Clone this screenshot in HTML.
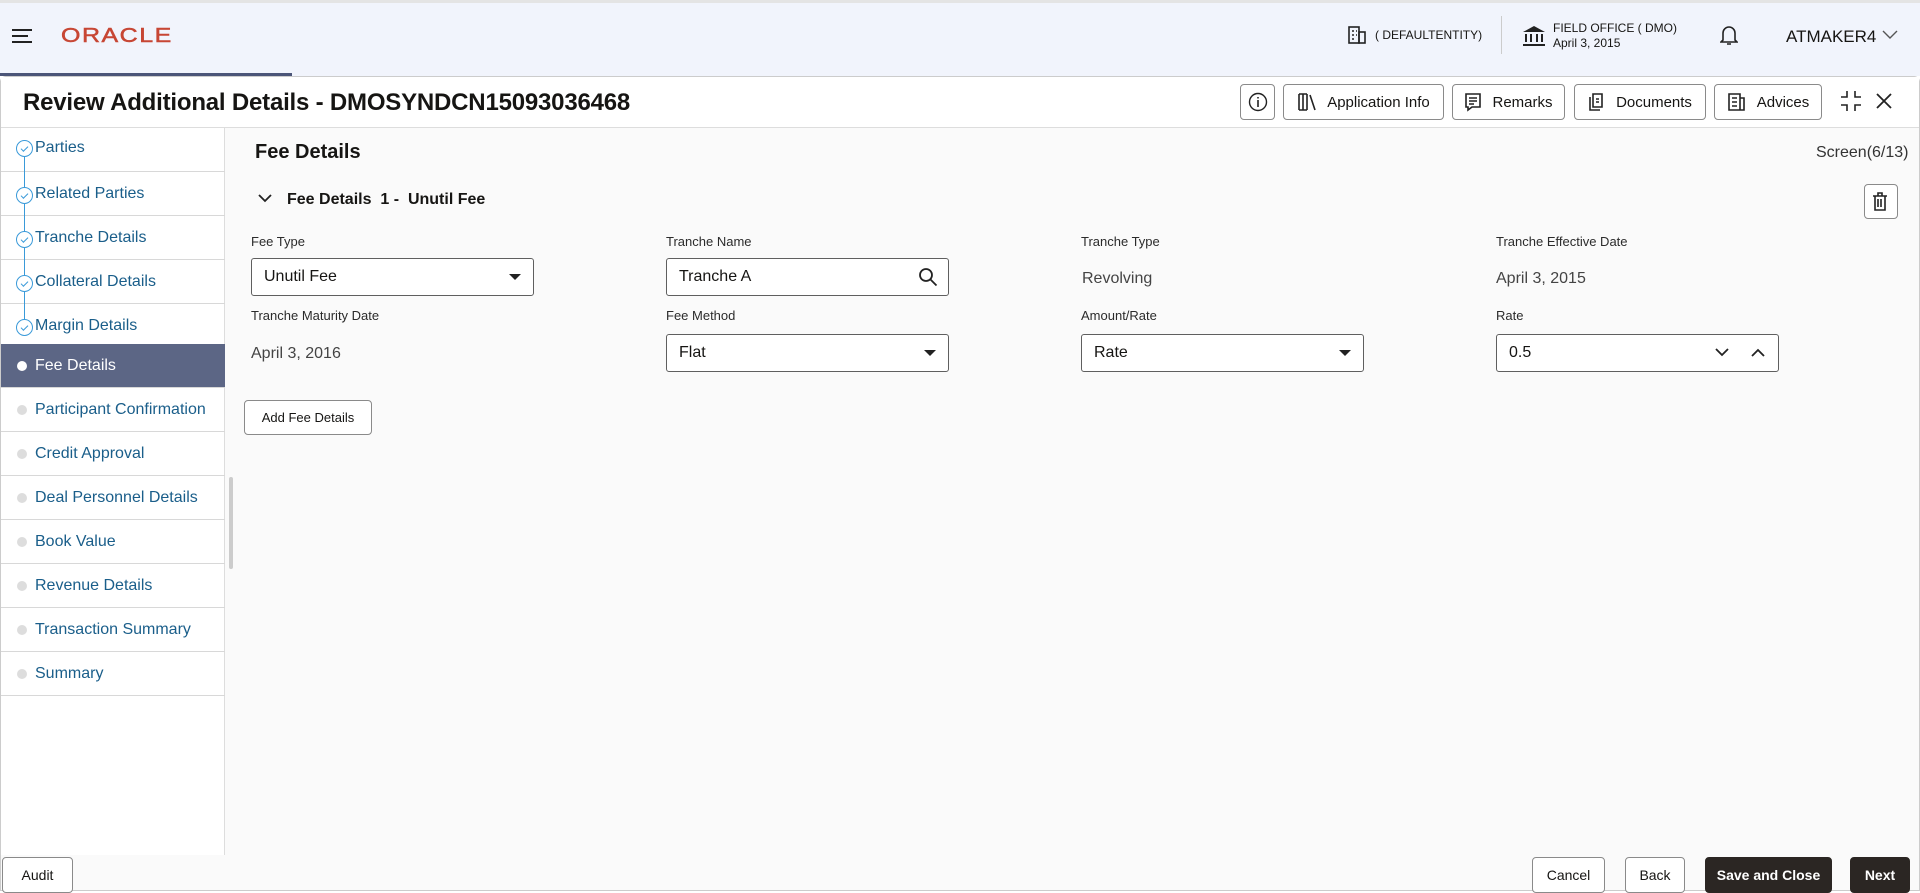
<!DOCTYPE html>
<html><head><meta charset="utf-8"><style>
*{box-sizing:border-box;margin:0;padding:0}
body{width:1920px;height:891px;overflow:hidden;font-family:"Liberation Sans",sans-serif;background:#fff;position:relative;color:#161513}
.a{position:absolute}
.hdr{left:0;top:0;width:1920px;height:76px;background:#f1f4fc;border-top:3px solid #e4e4e4}
.btn{position:absolute;border:1px solid #8a8a8a;border-radius:4px;background:#fff;font-size:15px;display:flex;align-items:center;justify-content:center;gap:10px;color:#161513}
.side{left:1px;top:128px;width:224px;height:727px;border-right:1px solid #ddd;background:#fff}
.it{position:absolute;left:0;width:224px;height:44px;border-bottom:1px solid #d8d8d8;font-size:16px;color:#1a5e8a;padding-left:34px;line-height:44px}
.dot{position:absolute;left:16px;top:17px;width:10px;height:10px;border-radius:50%;background:#ddd}
.chk{position:absolute;left:15px;top:15px;width:17px;height:17px;border-radius:50%;border:1px solid #3a9ad9;background:#fff;z-index:2}
.chk:after{content:"";position:absolute;left:4px;top:5px;width:6px;height:3px;border-left:1px solid #3a9ad9;border-bottom:1px solid #3a9ad9;transform:rotate(-45deg)}
.lbl{position:absolute;font-size:13px;color:#2b2b2b}
.inp{position:absolute;width:283px;height:38px;border:1px solid #5f5f5f;border-radius:3px;background:#fff;font-size:16px;padding-left:12px;line-height:36px}
.val{position:absolute;font-size:16px;color:#444}
.car{position:absolute;right:12px;top:15px;width:0;height:0;border-left:6px solid transparent;border-right:6px solid transparent;border-top:6px solid #222}
</style></head><body>
<div class="a hdr"></div>
<div class="a" style="left:12px;top:29px;width:20px;height:2px;background:#222"></div>
<div class="a" style="left:12px;top:35px;width:16px;height:2px;background:#222"></div>
<div class="a" style="left:12px;top:41px;width:20px;height:2px;background:#222"></div>
<div class="a" style="left:61px;top:24px;font-size:25px;color:#c74634;letter-spacing:1.5px;transform:scaleY(0.82);transform-origin:left top;-webkit-text-stroke:0.6px #c74634">ORACLE</div>
<svg class="a" style="left:1347px;top:25px" width="20" height="20" viewBox="0 0 20 20" fill="none" stroke="#222" stroke-width="1.6"><rect x="2" y="2" width="10" height="16"/><rect x="12" y="7" width="6" height="11"/><path d="M5 6h2M5 10h2M5 14h2M9 6h1M9 10h1"/></svg>
<div class="a" style="left:1375px;top:28px;font-size:12px">( DEFAULTENTITY)</div>
<div class="a" style="left:1501px;top:16px;width:1px;height:38px;background:#ccc"></div>
<svg class="a" style="left:1522px;top:25px" width="24" height="22" viewBox="0 0 24 22" fill="#222"><path d="M12 1L1 7h22z"/><rect x="3" y="9" width="2" height="8"/><rect x="8" y="9" width="2" height="8"/><rect x="14" y="9" width="2" height="8"/><rect x="19" y="9" width="2" height="8"/><rect x="1" y="19" width="22" height="2"/></svg>
<div class="a" style="left:1553px;top:21px;font-size:12px;line-height:15px">FIELD OFFICE ( DMO)<br>April 3, 2015</div>
<svg class="a" style="left:1720px;top:24px" width="18" height="22" viewBox="0 0 18 22" fill="none" stroke="#222" stroke-width="1.6"><path d="M3 16V9a6 6 0 0112 0v7l2 2H1z M7 20h4"/></svg>
<div class="a" style="left:1786px;top:27px;font-size:17px">ATMAKER4</div>
<svg class="a" style="left:1882px;top:30px" width="16" height="10"><path d="M1 1l7 7 7-7" fill="none" stroke="#555" stroke-width="1.4"/></svg>
<div class="a" style="left:0;top:73px;width:292px;height:3px;background:#4b5578"></div>
<div class="a" style="left:0;top:76px;width:1920px;height:815px;background:#fafafa;border:1px solid #ccc;border-radius:6px 6px 0 0"></div>
<div class="a" style="left:1px;top:77px;width:1918px;height:51px;background:#fff;border-bottom:1px solid #ddd"></div>
<div class="a" style="left:23px;top:89px;font-size:24px;font-weight:bold;letter-spacing:-0.2px">Review Additional Details - DMOSYNDCN15093036468</div>
<div class="btn" style="left:1240px;top:84px;width:35px;height:36px"><svg width="20" height="20"><circle cx="10" cy="10" r="8.5" fill="none" stroke="#222" stroke-width="1.4"/><path d="M10 8v7M10 5v1.5" stroke="#222" stroke-width="1.6"/></svg></div>
<div class="btn" style="left:1283px;top:84px;width:161px;height:36px"><svg width="20" height="20" fill="none" stroke="#222" stroke-width="1.6"><path d="M2 2v16M6 2v16M10 2v16M2 2h8M2 18h8M13 3l5 15"/></svg>Application Info</div>
<div class="btn" style="left:1452px;top:84px;width:113px;height:36px"><svg width="18" height="20" fill="none" stroke="#222" stroke-width="1.6"><path d="M2 2h14v13H8l-4 3v-3H2z M5 6h8M5 9h8M5 12h5"/></svg>Remarks</div>
<div class="btn" style="left:1574px;top:84px;width:132px;height:36px"><svg width="18" height="20" fill="none" stroke="#222" stroke-width="1.6"><path d="M5 2h9v13H5z M2 5v13h10 M8 7h3M8 10h3"/></svg>Documents</div>
<div class="btn" style="left:1714px;top:84px;width:108px;height:36px"><svg width="20" height="20" fill="none" stroke="#222" stroke-width="1.6"><path d="M2 2h11v16H2z M13 6h4v12h-4 M5 6h5M5 10h5M5 14h5"/></svg>Advices</div>
<svg class="a" style="left:1840px;top:90px" width="22" height="22" fill="none" stroke="#222" stroke-width="1.6"><path d="M7 1v6H1M15 1v6h6M7 21v-6H1M15 21v-6h6"/></svg>
<svg class="a" style="left:1876px;top:93px" width="16" height="16" stroke="#222" stroke-width="1.8"><path d="M1 1l14 14M15 1L1 15"/></svg>
<div class="a side">
<div class="it" style="top:0;line-height:40px"><span class="chk" style="top:12px"></span>Parties</div>
<div class="it" style="top:44px"><span class="chk"></span>Related Parties</div>
<div class="it" style="top:88px"><span class="chk"></span>Tranche Details</div>
<div class="it" style="top:132px"><span class="chk"></span>Collateral Details</div>
<div class="it" style="top:176px"><span class="chk"></span>Margin Details</div>
<div class="a" style="left:23px;top:29px;width:1px;height:166px;background:#3a9ad9;z-index:1"></div>
<div class="it" style="top:216px;background:#5c6685;color:#fff"><span class="dot" style="background:#fff"></span>Fee Details</div>
<div class="it" style="top:260px"><span class="dot"></span>Participant Confirmation</div>
<div class="it" style="top:304px"><span class="dot"></span>Credit Approval</div>
<div class="it" style="top:348px"><span class="dot"></span>Deal Personnel Details</div>
<div class="it" style="top:392px"><span class="dot"></span>Book Value</div>
<div class="it" style="top:436px"><span class="dot"></span>Revenue Details</div>
<div class="it" style="top:480px"><span class="dot"></span>Transaction Summary</div>
<div class="it" style="top:524px"><span class="dot"></span>Summary</div>
</div>
<div class="a" style="left:229px;top:477px;width:4px;height:92px;background:#ccc;border-radius:2px"></div>
<div class="a" style="left:255px;top:141px;font-size:20px;font-weight:bold">Fee Details</div>
<div class="a" style="left:1816px;top:144px;font-size:16px;color:#333">Screen(6/13)</div>
<svg class="a" style="left:258px;top:194px" width="14" height="10"><path d="M1 1l6 6 6-6" fill="none" stroke="#222" stroke-width="1.8"/></svg>
<div class="a" style="left:287px;top:191px;font-size:16px;font-weight:bold">Fee Details&nbsp; 1 -&nbsp; Unutil Fee</div>
<div class="btn" style="left:1864px;top:184px;width:34px;height:35px"><svg width="18" height="20" fill="none" stroke="#222" stroke-width="1.6"><path d="M1 4h14M6 4V1h4v3M3 4v14h10V4M6 7v8M9 7v8"/></svg></div>
<div class="lbl" style="left:251px;top:234px">Fee Type</div>
<div class="lbl" style="left:666px;top:234px">Tranche Name</div>
<div class="lbl" style="left:1081px;top:234px">Tranche Type</div>
<div class="lbl" style="left:1496px;top:234px">Tranche Effective Date</div>
<div class="inp" style="left:251px;top:258px">Unutil Fee<span class="car"></span></div>
<div class="inp" style="left:666px;top:258px">Tranche A<svg class="a" style="right:10px;top:8px" width="20" height="20" fill="none" stroke="#222" stroke-width="1.8"><circle cx="8" cy="8" r="6"/><path d="M12.5 12.5l6 6"/></svg></div>
<div class="val" style="left:1082px;top:270px">Revolving</div>
<div class="val" style="left:1496px;top:270px">April 3, 2015</div>
<div class="lbl" style="left:251px;top:308px">Tranche Maturity Date</div>
<div class="lbl" style="left:666px;top:308px">Fee Method</div>
<div class="lbl" style="left:1081px;top:308px">Amount/Rate</div>
<div class="lbl" style="left:1496px;top:308px">Rate</div>
<div class="val" style="left:251px;top:345px">April 3, 2016</div>
<div class="inp" style="left:666px;top:334px">Flat<span class="car"></span></div>
<div class="inp" style="left:1081px;top:334px">Rate<span class="car"></span></div>
<div class="inp" style="left:1496px;top:334px">0.5<svg class="a" style="left:218px;top:13px" width="14" height="10"><path d="M1 1l6 6 6-6" fill="none" stroke="#222" stroke-width="1.8"/></svg><svg class="a" style="left:254px;top:13px" width="14" height="10"><path d="M1 8l6-6 6 6" fill="none" stroke="#222" stroke-width="1.8"/></svg></div>
<div class="btn" style="left:244px;top:400px;width:128px;height:35px;font-size:13px">Add Fee Details</div>
<div class="btn" style="left:2px;top:857px;width:71px;height:36px;font-size:14px">Audit</div>
<div class="btn" style="left:1532px;top:857px;width:73px;height:36px;font-size:14px">Cancel</div>
<div class="btn" style="left:1625px;top:857px;width:60px;height:36px;font-size:14px">Back</div>
<div class="btn" style="left:1705px;top:857px;width:127px;height:36px;font-size:14px;background:#2b2623;color:#fff;border-color:#2b2623;font-weight:bold">Save and Close</div>
<div class="btn" style="left:1850px;top:857px;width:60px;height:36px;font-size:14px;background:#2b2623;color:#fff;border-color:#2b2623;font-weight:bold">Next</div>
</body></html>
